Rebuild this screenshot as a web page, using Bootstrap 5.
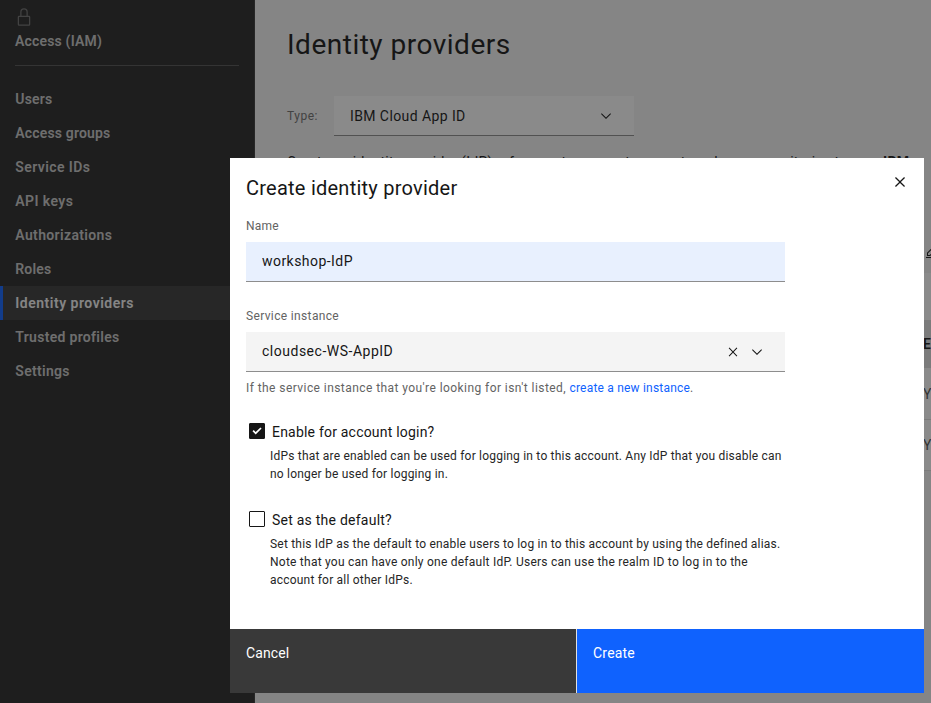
<!DOCTYPE html>
<html lang="en">
<head>
<meta charset="utf-8">
<meta name="viewport" content="width=device-width, initial-scale=1">
<title>Identity providers</title>
<link href="https://cdn.jsdelivr.net/npm/bootstrap@5.3.0/dist/css/bootstrap.min.css" rel="stylesheet">
<style>
body{font-family:Roboto,"Open Sans",sans-serif;font-size:14px;line-height:18px;color:#161616;background:#f4f4f4;height:703px;letter-spacing:.3px}
svg{display:block;fill:currentColor;flex:none}
.page-shell{height:703px}
/* side navigation */
.side-nav{width:255px;background:#262626;color:#c6c6c6;font-weight:600;border-right:1px solid #393939}
.side-head{height:66px;padding:7px 0 0 15px}
.side-head svg{margin-left:-1px;color:#6f6f6f}
.side-head-line{border-bottom:1px solid #525252;width:224px;padding-top:5px;padding-bottom:15px;letter-spacing:.18px}
.side-nav .nav{margin-top:16px}
.side-nav .nav-link{color:#c6c6c6;padding:0 0 0 12.3px;height:34px;line-height:34px;border-left:3px solid transparent}
.side-nav .nav-link.active{color:#f4f4f4;background:#393939;border-left-color:#0f62fe}
.ls-15{letter-spacing:.16px}.ls-20{letter-spacing:.205px}.ls-24{letter-spacing:.24px}.ls-30{letter-spacing:.3px}
.ls-35{letter-spacing:.35px}.ls-40{letter-spacing:.41px}.ls-43{letter-spacing:.43px}.ls-50{letter-spacing:.51px}
/* page behind the dialog */
.page-main{padding:27px 0 0 32px;min-width:0}
.page-title{font-size:28px;line-height:36px;font-weight:400;letter-spacing:.5px}
.type-row{margin-top:33px;height:40px}
.type-label{width:47px;font-size:12px;color:#6f6f6f}
.select-box{height:40px;border-bottom:1px solid #8d8d8d;padding:0 16px}
.type-select{width:300px;background:#fff;padding-right:20px}
.intro-text{margin-top:17px;letter-spacing:.28px}
.edit-row{margin-top:73px;height:29px;padding-left:638px}
.idp-table{width:760px}
.table-bar{height:47px;background:#fff}
.idp-row{height:51px;background:#fff;border-bottom:1px solid #e0e0e0;color:#525252;padding-left:636px}
.idp-row.idp-head{height:48px;background:#e0e0e0;border:0;color:#161616;font-weight:600}
.idp-head + .idp-row{height:52px;padding-top:1px}
.dim-layer{background:rgba(22,22,22,.5)}
/* dialog */
.dialog-box{left:230px;top:158px;width:694px;height:535px;background:#fff}
.dialog-title{font-size:20px;line-height:26px;font-weight:400;letter-spacing:.24px}
.dialog-head{padding:17px 14px 0 16px;height:60px}
.dialog-form{padding:0 0 0 16px;width:555px}
.field-label{font-size:12px;line-height:16px;color:#636363;margin-bottom:8px;display:block}
.instance-label{margin-top:26px}
.name-input{height:40px;border:0;border-bottom:1px solid #8d8d8d;border-radius:0;background:#e8f0fe;padding:0 16px 1px;font-size:14px;color:#161616;letter-spacing:.456px}
.name-input:focus{background:#e8f0fe;box-shadow:none}
.instance-select{background:#f4f4f4;padding-right:20px}
.instance-name{padding-bottom:2px}
.helper{font-size:12px;line-height:16px;color:#636363;margin-top:8px}
.helper a{color:#0f62fe}
.option-group{padding-left:24px;margin-top:27px}
.option-group + .option-group{margin-top:28px}
.option-group label{line-height:18px}
.option-group .check-box{width:16px;height:16px;margin:0 7px 0 -21px;border:1px solid #161616;border-radius:1px;flex:none}
.check-box:checked{background-color:#161616;background-image:none}
.check-wrap{position:relative}
.check-wrap svg{position:absolute;left:-21px;top:0;color:#fff;pointer-events:none}
.option-copy{font-size:12px;line-height:18px;color:#262626;margin:6px 0 0;white-space:nowrap}
.dialog-actions{height:64px;background:#e0e0e0}
.dialog-actions .btn{border:0;border-radius:0;font-size:14px;line-height:18px;color:#fff;text-align:left;padding:15px 16px 31px}
.cancel-btn,.cancel-btn:hover{background:#393939;width:346px;letter-spacing:.1px}
.create-btn,.create-btn:hover{background:#0f62fe;margin-left:1px;letter-spacing:.203px}
</style>
<script src="https://cdn.jsdelivr.net/npm/bootstrap@5.3.0/dist/js/bootstrap.bundle.min.js"></script>
</head>
<body class="overflow-hidden">
<div class="page-shell d-flex overflow-hidden">
  <aside class="side-nav flex-shrink-0">
    <div class="side-head">
      <svg width="20" height="20" viewBox="0 0 32 32"><path d="M24 14h-2V8a6 6 0 0 0-12 0v6H8a2 2 0 0 0-2 2v12a2 2 0 0 0 2 2h16a2 2 0 0 0 2-2V16a2 2 0 0 0-2-2ZM12 8a4 4 0 0 1 8 0v6h-8Zm12 20H8V16h16Z"/></svg>
      <div class="side-head-line">Access (IAM)</div>
    </div>
    <nav class="nav flex-column flex-nowrap">
      <a class="nav-link ls-15" href="#">Users</a>
      <a class="nav-link ls-15" href="#">Access groups</a>
      <a class="nav-link ls-40" href="#">Service IDs</a>
      <a class="nav-link ls-40" href="#">API keys</a>
      <a class="nav-link ls-35" href="#">Authorizations</a>
      <a class="nav-link ls-15" href="#">Roles</a>
      <a class="nav-link active ls-50" href="#">Identity providers</a>
      <a class="nav-link ls-30" href="#">Trusted profiles</a>
      <a class="nav-link ls-30" href="#">Settings</a>
    </nav>
  </aside>
  <main class="page-main flex-grow-1 overflow-hidden">
    <h1 class="page-title mb-0">Identity providers</h1>
    <div class="type-row d-flex align-items-center">
      <span class="type-label ls-50">Type:</span>
      <div class="select-box type-select d-flex align-items-center justify-content-between">
        <span class="ls-40">IBM Cloud App ID</span>
        <svg width="16" height="16" viewBox="0 0 16 16"><path d="M8 11 3 6l.7-.7L8 9.6l4.3-4.3.7.7z"/></svg>
      </div>
    </div>
    <p class="intro-text text-nowrap mb-0">Create an identity provider (IdP) reference to connect your external user repositories to your <b>IBM</b></p>
    <div class="edit-row">
      <svg width="16" height="16" viewBox="0 0 32 32"><path d="M2 26h28v2H2zM25.400 9c.8-.8.8-2 0-2.800l-3.600-3.600c-.8-.8-2-.8-2.800 0l-15 15V24h6.400l15-15zm-5-5L24 7.600l-3 3L17.400 7l3-3zM6 22v-3.600l10-10 3.600 3.600-10 10H6z"/></svg>
    </div>
    <div class="idp-table">
      <div class="table-bar"></div>
      <div class="idp-row idp-head d-flex align-items-center">Enabled</div>
      <div class="idp-row d-flex align-items-center">Yes</div>
      <div class="idp-row d-flex align-items-center">Yes</div>
    </div>
  </main>
</div>
<div class="dim-layer position-fixed top-0 start-0 w-100 h-100"></div>

<section class="dialog-box position-fixed d-flex flex-column" role="dialog" aria-label="Create identity provider">
  <header class="dialog-head d-flex justify-content-between align-items-start">
    <h2 class="dialog-title mb-0">Create identity provider</h2>
    <svg width="20" height="14" viewBox="0 0 20 14"><path d="m15 2.900-.9-.9L10 6.100 5.900 2l-.9.900L9.100 7 5 11.100l.9.900L10 7.900l4.100 4.100.9-.9L10.900 7z"/></svg>
  </header>
  <form class="dialog-form flex-grow-1">
    <label class="field-label ls-24" for="idp-name">Name</label>
    <input id="idp-name" class="form-control name-input" value="workshop-IdP">
    <div class="field-label instance-label ls-35">Service instance</div>
    <div class="select-box instance-select d-flex align-items-center">
      <span class="instance-name me-auto ls-50">cloudsec-WS-AppID</span>
      <svg class="me-2" width="16" height="16" viewBox="0 0 16 16"><path d="m12.300 4.300-.7-.7L8 7.300 4.400 3.600l-.7.700L7.300 8l-3.600 3.700.7.700L8 8.700l3.600 3.700.7-.7L8.700 8z"/></svg>
      <svg width="16" height="16" viewBox="0 0 16 16"><path d="M8 11 3 6l.7-.7L8 9.600l4.300-4.300.7.700z"/></svg>
    </div>
    <div class="helper text-nowrap ls-43">If the service instance that you're looking for isn't listed, <a class="text-decoration-none ls-20" href="#">create a new instance</a>.</div>
    <div class="option-group">
      <div class="check-wrap d-flex align-items-start">
        <input class="form-check-input check-box" type="checkbox" id="login-on" checked>
        <svg width="16" height="16" viewBox="0 0 16 16"><path d="M6.700 11.500 3.500 8.300l1.200-1.200 2 2 4.700-4.700 1.200 1.200z"/></svg>
        <label class="ls-20" for="login-on">Enable for account login?</label>
      </div>
      <p class="option-copy ls-20">IdPs that are enabled can be used for logging in to this account. Any IdP that you disable can<br>no longer be used for logging in.</p>
    </div>
    <div class="option-group">
      <div class="check-wrap d-flex align-items-start">
        <input class="form-check-input check-box" type="checkbox" id="as-default">
        <label class="ls-24" for="as-default">Set as the default?</label>
      </div>
      <p class="option-copy ls-20">Set this IdP as the default to enable users to log in to this account by using the defined alias.<br><span class="ls-24">Note that you can have only one default IdP. Users can use the realm ID to log in to the</span><br>account for all other IdPs.</p>
    </div>
  </form>
  <footer class="dialog-actions d-flex">
    <button class="btn cancel-btn" type="button">Cancel</button>
    <button class="btn create-btn flex-grow-1" type="button">Create</button>
  </footer>
</section>
</body>
</html>
